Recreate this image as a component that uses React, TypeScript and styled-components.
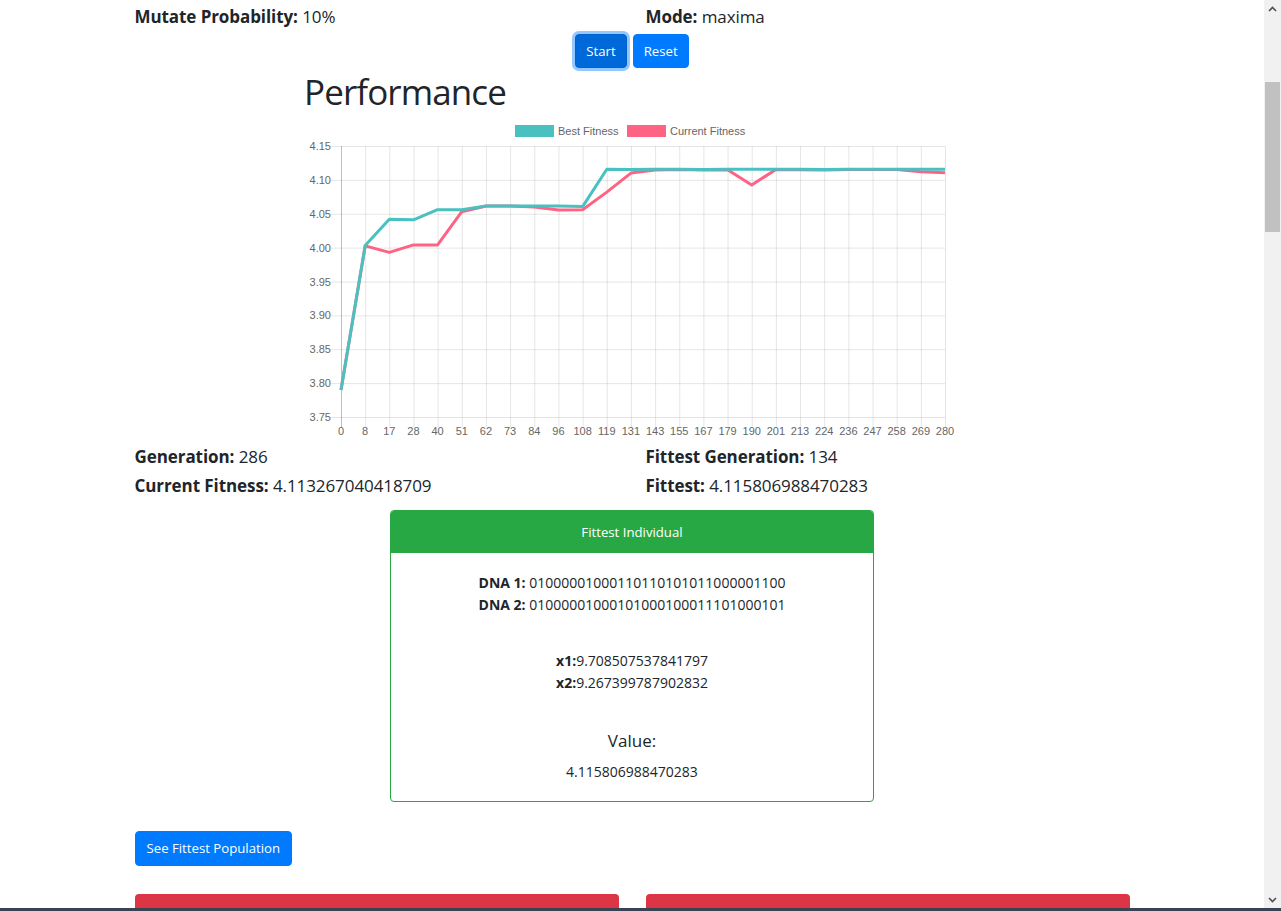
import React from "react";
import styled, { createGlobalStyle } from "styled-components";

const GlobalStyle = createGlobalStyle`
  html, body {
    margin: 0;
    padding: 0;
    overflow: hidden;
    background: #fff;
  }
  body {
    font-family: "Open Sans", "Noto Sans", sans-serif;
    color: #212529;
  }
`;

const Screen = styled.div`
  display: flex;
  flex-direction: column;
  width: 1281px;
  height: 911px;
`;

const Viewport = styled.div`
  display: flex;
  height: 908px;
`;

const Page = styled.main`
  flex: 1;
  overflow: hidden;
  padding-top: 6px;
`;

const Taskbar = styled.div`
  height: 3px;
  background: #3b4252;
`;

const Scrollbar = styled.div`
  width: 17px;
  background: #f1f1f1;
  display: flex;
  flex-direction: column;
  align-items: center;
`;

const ScrollArrow = styled.div`
  height: 17px;
  width: 17px;
  display: flex;
  align-items: center;
  justify-content: center;
`;

const ScrollGap = styled.div<{ $h?: number }>`
  height: ${(p) => (p.$h ? `${p.$h}px` : "auto")};
  flex: ${(p) => (p.$h ? "none" : 1)};
`;

const Thumb = styled.div`
  width: 15px;
  height: 150px;
  background: #c1c1c1;
`;

const Container = styled.div`
  width: 995px;
  margin: 0 auto;
`;

const TwoCol = styled.div`
  display: grid;
  grid-template-columns: 484px 484px;
  column-gap: 27px;
`;

const Stat = styled.h5`
  margin: 0 0 7px;
  font-size: 17px;
  font-weight: 400;
  line-height: 22px;
  letter-spacing: -0.08px;
  b {
    font-weight: 700;
  }
`;

const ButtonRow = styled.div`
  display: flex;
  justify-content: center;
  gap: 6px;
  margin-top: -1px;
`;

const Button = styled.button<{ $focus?: boolean }>`
  font-family: "Open Sans", "Noto Sans", sans-serif;
  font-size: 13.2px;
  line-height: 20px;
  padding: 6px 10px;
  color: #fff;
  border-radius: 4px;
  border: 1px solid ${(p) => (p.$focus ? "#0062cc" : "#007bff")};
  background: ${(p) => (p.$focus ? "#0069d9" : "#007bff")};
  box-shadow: ${(p) => (p.$focus ? "0 0 0 3px rgba(38, 143, 255, 0.5)" : "none")};
  cursor: pointer;
`;

const ChartBlock = styled.section`
  width: 660px;
  margin: 0 auto;
`;

const Heading = styled.h1`
  font-size: 35px;
  font-weight: 400;
  line-height: 43px;
  letter-spacing: -0.9px;
  margin: 2px 0 5px;
  padding-left: 2px;
`;

const ChartSvg = styled.svg`
  display: block;
  font-family: "Liberation Sans", Arial, sans-serif;
  font-size: 11px;
`;

const Stats = styled(TwoCol)`
  margin-top: 2px;
`;

const Card = styled.div`
  width: 484px;
  margin: 6px auto 0;
  border: 1px solid #28a745;
  border-radius: 4px;
  overflow: hidden;
  box-sizing: border-box;
`;

const CardHeader = styled.div`
  background: #28a745;
  color: #fff;
  font-size: 13.2px;
  line-height: 21px;
  text-align: center;
  padding: 11px 20px 10px;
`;

const CardBody = styled.div`
  text-align: center;
  padding: 19px 20px 18px;
  font-size: 14px;
  line-height: 22px;
`;

const Line = styled.p<{ $gap?: number }>`
  margin: ${(p) => p.$gap || 0}px 0 0;
  b {
    font-weight: 700;
  }
`;

const ValueTitle = styled.h5`
  margin: 33px 0 0;
  font-size: 17px;
  font-weight: 400;
  line-height: 27px;
`;

const PopButton = styled(Button)`
  margin-top: 29px;
  line-height: 21px;
  padding: 6px 11px;
`;

const RedCards = styled(TwoCol)`
  margin-top: 28px;
`;

const RedCard = styled.div`
  height: 200px;
  background: #dc3545;
  border-radius: 4px;
`;

const labels = [0, 8, 17, 28, 40, 51, 62, 73, 84, 96, 108, 119, 131, 143, 155, 167, 179, 190, 201, 213, 224, 236, 247, 258, 269, 280];
const best = [3.79, 4.003, 4.042, 4.041, 4.056, 4.056, 4.0615, 4.0615, 4.0615, 4.0615, 4.0605, 4.1158, 4.1155, 4.1156, 4.1156, 4.1155, 4.1156, 4.1156, 4.1156, 4.1156, 4.1155, 4.1156, 4.1156, 4.1156, 4.1156, 4.1156];
const current = [3.79, 4.0025, 3.993, 4.004, 4.004, 4.053, 4.0615, 4.0615, 4.060, 4.0555, 4.0558, 4.082, 4.110, 4.1146, 4.1152, 4.1146, 4.1148, 4.0925, 4.1155, 4.1148, 4.1146, 4.1155, 4.1152, 4.1152, 4.112, 4.1105];
const yTicks = [4.15, 4.1, 4.05, 4.0, 3.95, 3.9, 3.85, 3.8, 3.75];

const W = 660;
const H = 326;
const L = 39;
const R = 643;
const T = 28;
const B = 299;

const xAt = (i: number) => L + (i * (R - L)) / (labels.length - 1);
const yAt = (v: number) => T + ((4.15 - v) / 0.4) * (B - T);
const pts = (vals: number[]) => vals.map((v, i) => `${xAt(i).toFixed(1)},${yAt(v).toFixed(1)}`).join(" ");

function PerformanceChart() {
  return (
    <ChartSvg width={W} height={H} viewBox={`0 0 ${W} ${H}`}>
      {/* legend */}
      <rect x={213.5} y={7.5} width={38} height={11} fill="#4bc0c0" stroke="#4bc0c0" />
      <text x={256} y={17} fill="#666">Best Fitness</text>
      <rect x={325.5} y={7.5} width={38} height={11} fill="#ff6384" stroke="#ff6384" />
      <text x={368} y={17} fill="#666">Current Fitness</text>

      {yTicks.map((t) => (
        <g key={t}>
          <line x1={L - 10} x2={R} y1={yAt(t) + 0.5} y2={yAt(t) + 0.5} stroke="rgba(0,0,0,0.1)" />
          <text x={L - 10} y={yAt(t) + 4} fill="#666" textAnchor="end">
            {t.toFixed(2)}
          </text>
        </g>
      ))}
      {labels.map((l, i) => (
        <g key={l}>
          <line
            x1={xAt(i) + 0.5}
            x2={xAt(i) + 0.5}
            y1={T}
            y2={B + 10}
            stroke={i === 0 ? "rgba(0,0,0,0.25)" : "rgba(0,0,0,0.1)"}
          />
          <text x={xAt(i)} y={B + 18} fill="#666" textAnchor="middle">
            {l}
          </text>
        </g>
      ))}

      <polyline points={pts(current)} fill="none" stroke="#ff6384" strokeWidth={3} strokeLinejoin="round" />
      <polyline points={pts(best)} fill="none" stroke="#4bc0c0" strokeWidth={3} strokeLinejoin="round" />
    </ChartSvg>
  );
}

export default function App() {
  return (
    <Screen>
      <GlobalStyle />
      <Viewport>
        <Page>
          <Container>
            <TwoCol>
              <Stat>
                <b>Mutate Probability:</b> 10%
              </Stat>
              <Stat>
                <b>Mode:</b> maxima
              </Stat>
            </TwoCol>
            <ButtonRow>
              <Button $focus>Start</Button>
              <Button>Reset</Button>
            </ButtonRow>

            <ChartBlock>
              <Heading>Performance</Heading>
              <PerformanceChart />
            </ChartBlock>

            <Stats>
              <div>
                <Stat>
                  <b>Generation:</b> 286
                </Stat>
                <Stat>
                  <b>Current Fitness:</b> 4.113267040418709
                </Stat>
              </div>
              <div>
                <Stat>
                  <b>Fittest Generation:</b> 134
                </Stat>
                <Stat>
                  <b>Fittest:</b> 4.115806988470283
                </Stat>
              </div>
            </Stats>

            <Card>
              <CardHeader>Fittest Individual</CardHeader>
              <CardBody>
                <Line>
                  <b>DNA 1:</b> 01000001000110110101011000001100
                </Line>
                <Line>
                  <b>DNA 2:</b> 01000001000101000100011101000101
                </Line>
                <Line $gap={34}>
                  <b>x1:</b>9.708507537841797
                </Line>
                <Line>
                  <b>x2:</b>9.267399787902832
                </Line>
                <ValueTitle>Value:</ValueTitle>
                <Line $gap={7}>4.115806988470283</Line>
              </CardBody>
            </Card>

            <PopButton>See Fittest Population</PopButton>

            <RedCards>
              <RedCard />
              <RedCard />
            </RedCards>
          </Container>
        </Page>
        <Scrollbar>
          <ScrollArrow>
            <svg width="9" height="6" viewBox="0 0 9 6">
              <polyline points="1,5 4.5,1.5 8,5" fill="none" stroke="#505050" strokeWidth="1.6" />
            </svg>
          </ScrollArrow>
          <ScrollGap $h={65} />
          <Thumb />
          <ScrollGap />
          <ScrollArrow>
            <svg width="9" height="6" viewBox="0 0 9 6">
              <polyline points="1,1 4.5,4.5 8,1" fill="none" stroke="#505050" strokeWidth="1.6" />
            </svg>
          </ScrollArrow>
        </Scrollbar>
      </Viewport>
      <Taskbar />
    </Screen>
  );
}
